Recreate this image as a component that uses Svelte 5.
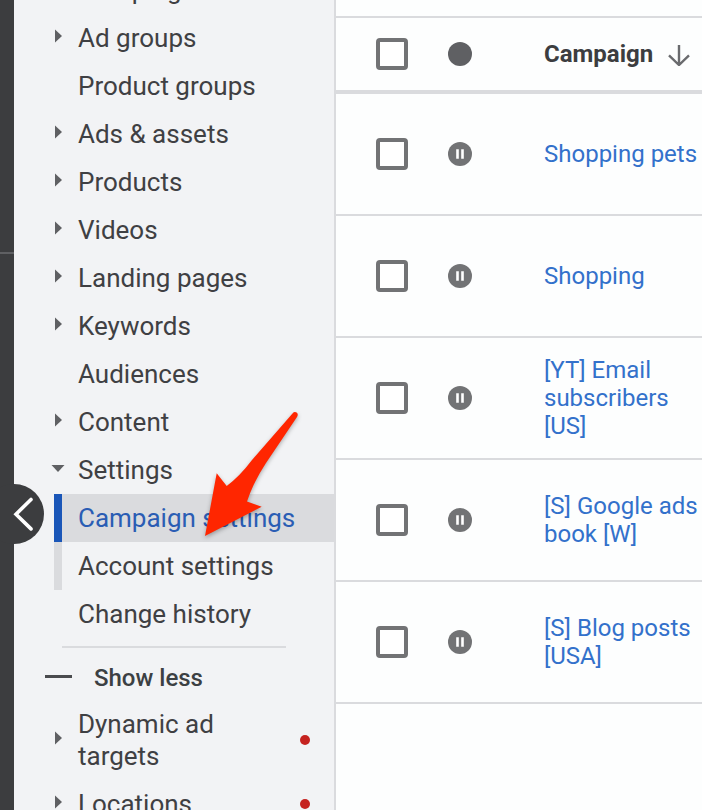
<script>
  const primary = [
    { label: 'Campaigns', arrow: 'right' },
    { label: 'Ad groups', arrow: 'right' },
    { label: 'Product groups' },
    { label: 'Ads & assets', arrow: 'right' },
    { label: 'Products', arrow: 'right' },
    { label: 'Videos', arrow: 'right' },
    { label: 'Landing pages', arrow: 'right' },
    { label: 'Keywords', arrow: 'right' },
    { label: 'Audiences' },
    { label: 'Content', arrow: 'right' },
    { label: 'Settings', arrow: 'down' },
    { label: 'Campaign settings', sub: true, current: true },
    { label: 'Account settings', sub: true },
    { label: 'Change history' }
  ];
  const more = [
    { label: 'Dynamic ad targets', arrow: 'right', dot: true },
    { label: 'Locations', arrow: 'right', dot: true }
  ];
  const campaigns = [
    'Shopping pets',
    'Shopping',
    '[YT] Email subscribers [US]',
    '[S] Google ads book [W]',
    '[S] Blog posts [USA]'
  ];
</script>

{#snippet navItem(item)}
  <li>
    <a href="#top" class="item" class:sub={item.sub} class:current={item.current} aria-current={item.current ? 'page' : undefined}>
      <span class="gutter">
        {#if item.arrow === 'right'}
          <svg width="16" height="16" viewBox="0 0 16 16" aria-hidden="true"><path d="M5 1.5 12 8 5 14.5Z" /></svg>
        {:else if item.arrow === 'down'}
          <svg width="16" height="16" viewBox="0 0 16 16" aria-hidden="true"><path d="M1.5 5h13L8 12Z" /></svg>
        {/if}
      </span>
      <span class="label">{item.label}</span>
      {#if item.dot}<span class="dot"></span>{/if}
    </a>
  </li>
{/snippet}

<div class="app">
  <div class="rail"><div class="rail-top"></div></div>

  <nav class="side" aria-label="Account">
    <ul>
      {#each primary as item}{@render navItem(item)}{/each}
    </ul>
    <hr />
    <button class="less" type="button">
      <span class="minus"></span>Show less
    </button>
    <ul>
      {#each more as item}{@render navItem(item)}{/each}
    </ul>
  </nav>

  <main>
    <table>
      <thead>
        <tr>
          <th class="check"><input type="checkbox" aria-label="Select all campaigns" /></th>
          <th class="status">
            <svg width="24" height="24" viewBox="0 0 24 24" role="img" aria-label="Status"><circle cx="12" cy="12" r="12" fill="#5f6063" /></svg>
          </th>
          <th class="name">
            <button class="sort" type="button">
              Campaign
              <svg width="24" height="24" viewBox="0 0 24 24" aria-hidden="true">
                <path d="M12 3v20M2 13.300 12 23 22 13.300" fill="none" stroke="#6a6b6e" stroke-width="2.400" />
              </svg>
            </button>
          </th>
        </tr>
      </thead>
      <tbody>
        {#each campaigns as name}
          <tr>
            <td class="check"><input type="checkbox" aria-label={name} /></td>
            <td class="status">
              <svg width="24" height="24" viewBox="0 0 24 24" role="img" aria-label="Paused">
                <circle cx="12" cy="12" r="12" fill="#727375" />
                <path d="M8.200 7.200h2.600v9.600H8.200zM13.200 7.200h2.600v9.600h-2.600z" fill="#fff" />
              </svg>
            </td>
            <td class="name"><a href="#top">{name}</a></td>
          </tr>
        {/each}
      </tbody>
    </table>
  </main>

  <button class="collapse" type="button" aria-label="Collapse menu">
    <svg width="60" height="60" viewBox="0 0 60 60" aria-hidden="true">
      <path d="M47 15.500 32 30.200 47 44.900" fill="none" stroke="#fff" stroke-width="3.600" stroke-linecap="round" />
    </svg>
  </button>

  <svg class="pointer" width="100" height="132" viewBox="0 0 100 132" aria-hidden="true">
    <path d="M5 126 16.700 63.300 26.700 76Q40 66 52 50L92.500 3.500Q94.500 1 97 2.800 98.500 4.500 97 7L66 53Q53 73 47 91.500L61.700 96.700Z" fill="#ff2600" />
  </svg>
</div>

<style>
  :global(body) {
    margin: 0;
  }
  .app {
    position: relative;
    display: flex;
    height: 100vh;
    overflow: hidden;
    background: #fdfefe;
    color: #3c4043;
    font-family: Roboto, 'Liberation Sans', sans-serif;
  }
  .rail {
    flex: none;
    width: 14px;
    background: #3c3d3f;
  }
  .rail-top {
    height: 252px;
    border-bottom: 2px solid #5f6063;
  }
  .side {
    flex: none;
    box-sizing: border-box;
    width: 322px;
    border-right: 2px solid #dadbde;
    background: #f2f3f5;
  }
  ul {
    margin: 0;
    padding: 0;
    list-style: none;
  }
  .side ul:first-child {
    margin-top: -34px;
  }
  .item {
    display: flex;
    align-items: center;
    padding: 8px 24px 8px 40px;
    color: #3f4043;
    font-size: 26px;
    line-height: 32px;
    text-decoration: none;
  }
  .gutter {
    flex: none;
    width: 24px;
    height: 20px;
    fill: #5f6063;
  }
  .gutter svg {
    display: block;
    margin-left: -4px;
  }
  .label {
    flex: 1;
    max-width: 220px;
  }
  .dot {
    flex: none;
    width: 10px;
    height: 10px;
    border-radius: 50%;
    background: #c5221f;
  }
  .item:has(.dot) .label {
    padding-right: 40px;
  }
  .sub {
    background: linear-gradient(#dadbde, #dadbde) 40px 0 / 8px 100% no-repeat;
  }
  .sub.current {
    background: linear-gradient(90deg, transparent 40px, #1a56b8 40px, #1a56b8 48px, #dadbde 48px);
    color: #2a5db4;
  }
  hr {
    margin: 8px 48px;
    border: 0;
    border-top: 2px solid #dadbde;
  }
  button {
    border: 0;
    padding: 0;
    background: none;
    color: inherit;
    font: inherit;
    cursor: pointer;
  }
  .less {
    display: flex;
    align-items: center;
    gap: 22px;
    height: 44px;
    padding-left: 31px;
    font-size: 24px;
    font-weight: 500;
  }
  .minus {
    width: 27px;
    height: 3px;
    margin-bottom: 3px;
    background: #4a4b4e;
  }
  main {
    flex: 1;
    min-width: 0;
    padding-top: 16px;
  }
  table {
    width: 100%;
    border-collapse: separate;
    border-spacing: 0;
    border-top: 2px solid #dadbde;
    table-layout: fixed;
    font-size: 24px;
    line-height: 28px;
    text-align: left;
  }
  th {
    height: 72px;
    padding: 0;
    border-bottom: 4px solid #dadbde;
    vertical-align: middle;
  }
  td {
    height: 120px;
    padding: 0;
    border-bottom: 2px solid #dadbde;
    vertical-align: middle;
  }
  .check {
    width: 112px;
  }
  .status {
    width: 96px;
  }
  table svg,
  table input {
    display: block;
  }
  input {
    appearance: none;
    box-sizing: border-box;
    width: 32px;
    height: 32px;
    margin: 0 0 0 40px;
    border: 4px solid #727375;
    border-radius: 4px;
    background: #fff;
  }
  .sort {
    display: flex;
    align-items: center;
    gap: 14px;
    color: #3c3d40;
    font-weight: 700;
  }
  td a {
    color: #3371cb;
    text-decoration: none;
  }
  .collapse {
    position: absolute;
    top: 484px;
    left: -16px;
    width: 60px;
    height: 60px;
    border-radius: 50%;
    background: #3c3d3f;
  }
  .collapse svg {
    display: block;
  }
  .pointer {
    position: absolute;
    top: 410px;
    left: 200px;
    filter: drop-shadow(0 2px 2px rgb(0 0 0 / 30%));
  }
</style>
